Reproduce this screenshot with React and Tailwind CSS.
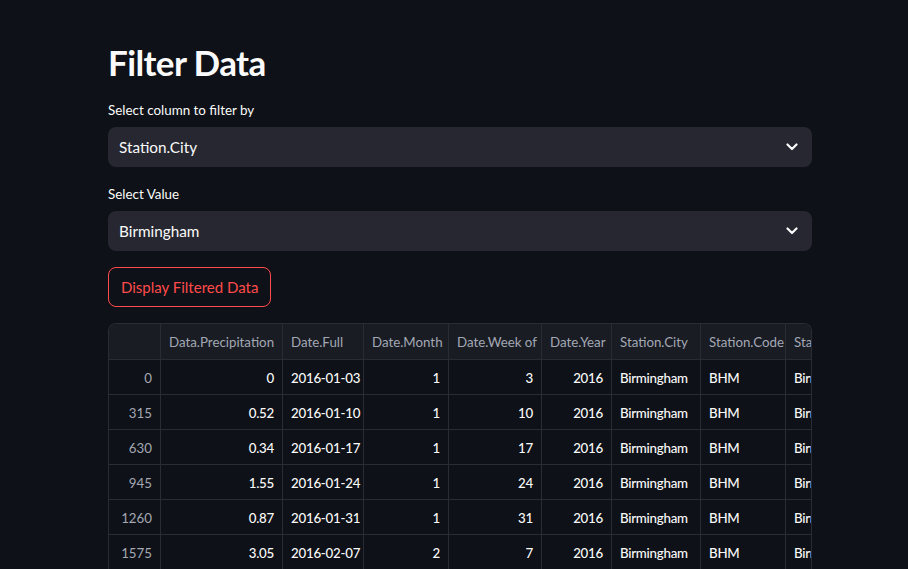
import React from 'react';

const columns = [
    { key: 'idx', label: '', w: 'w-[52px]', align: 'text-right', muted: true },
    { key: 'precip', label: 'Data.Precipitation', w: 'w-[122px]', align: 'text-right' },
    { key: 'full', label: 'Date.Full', w: 'w-[81px]', align: 'text-left' },
    { key: 'month', label: 'Date.Month', w: 'w-[85px]', align: 'text-right' },
    { key: 'week', label: 'Date.Week of', w: 'w-[93px]', align: 'text-right' },
    { key: 'year', label: 'Date.Year', w: 'w-[70px]', align: 'text-right' },
    { key: 'city', label: 'Station.City', w: 'w-[89px]', align: 'text-left' },
    { key: 'code', label: 'Station.Code', w: 'w-[85px]', align: 'text-left' },
    { key: 'loc', label: 'Station.Location', w: 'w-[140px]', align: 'text-left' },
];

const rows = [
    { idx: 0, precip: '0', full: '2016-01-03', month: 1, week: 3 },
    { idx: 315, precip: '0.52', full: '2016-01-10', month: 1, week: 10 },
    { idx: 630, precip: '0.34', full: '2016-01-17', month: 1, week: 17 },
    { idx: 945, precip: '1.55', full: '2016-01-24', month: 1, week: 24 },
    { idx: 1260, precip: '0.87', full: '2016-01-31', month: 1, week: 31 },
    { idx: 1575, precip: '3.05', full: '2016-02-07', month: 2, week: 7 },
].map(r => ({ ...r, year: 2016, city: 'Birmingham', code: 'BHM', loc: 'Birmingham, AL' }));

function Chevron() {
    return (
        <svg width="12" height="8" viewBox="0 0 12 8" fill="none">
            <path d="M1.5 1.5 L6 6 L10.5 1.5" stroke="#fafafa" strokeWidth="2.2" strokeLinecap="round" strokeLinejoin="round" />
        </svg>
    );
}

function Select({ label, value }) {
    return (
        <div className="flex flex-col">
            <label className="text-[13.4px] text-[#fafafa] leading-[20px] mb-[7px]">{label}</label>
            <div className="h-[40px] rounded-lg bg-[#262730] flex items-center justify-between pl-[11px] pr-[14px]">
                <span className="text-[15.3px] text-[#fafafa]">{value}</span>
                <Chevron />
            </div>
        </div>
    );
}

export default function App() {
    return (
        <div className="min-h-screen w-full bg-[#0e1117] text-[#fafafa] overflow-hidden" style={{ fontFamily: 'Lato, "Noto Sans", sans-serif' }}>
            <div className="w-[704px] ml-[108px] pt-[40px]">
                <h1 className="text-[35px] font-bold leading-[44px] tracking-[-0.6px] mb-[16px]">Filter Data</h1>

                <div className="flex flex-col gap-[17px]">
                    <Select label="Select column to filter by" value="Station.City" />
                    <Select label="Select Value" value="Birmingham" />
                </div>

                {/* Button */}
                <button className="mt-[16px] h-[40px] px-[12px] rounded-lg border border-[#ff4b4b] text-[#ff4b4b] text-[15px] bg-transparent">
                    Display Filtered Data
                </button>

                {/* Dataframe */}
                <div className="mt-[16px] w-[704px] overflow-hidden rounded-t-lg border-t border-l border-r border-[#2a2c35] text-[13.3px]">
                    <div className="flex bg-[#1a1c24] h-[36px] border-b border-[#2a2c35]">
                        {columns.map((c, i) => (
                            <div key={c.key} className={`${c.w} shrink-0 h-full flex items-center pt-[2px] px-[8px] text-[#a3a8b4] whitespace-nowrap overflow-hidden ${i < columns.length - 1 ? 'border-r border-[#2a2c35]' : ''}`}>
                                {c.label}
                            </div>
                        ))}
                    </div>
                    {rows.map((r, ri) => (
                        <div key={ri} className="flex h-[35px] border-b border-[#2a2c35]">
                            {columns.map((c, i) => (
                                <div key={c.key} className={`${c.w} shrink-0 h-full flex items-center pt-[3px] px-[8px] whitespace-nowrap overflow-hidden ${c.align === 'text-right' ? 'justify-end' : 'justify-start'} ${c.muted ? 'text-[#a3a8b4]' : 'text-[#fafafa] font-medium tracking-[-0.25px]'} ${i < columns.length - 1 ? 'border-r border-[#2a2c35]' : ''}`}>
                                    {r[c.key]}
                                </div>
                            ))}
                        </div>
                    ))}
                </div>
            </div>
        </div>
    );
}
